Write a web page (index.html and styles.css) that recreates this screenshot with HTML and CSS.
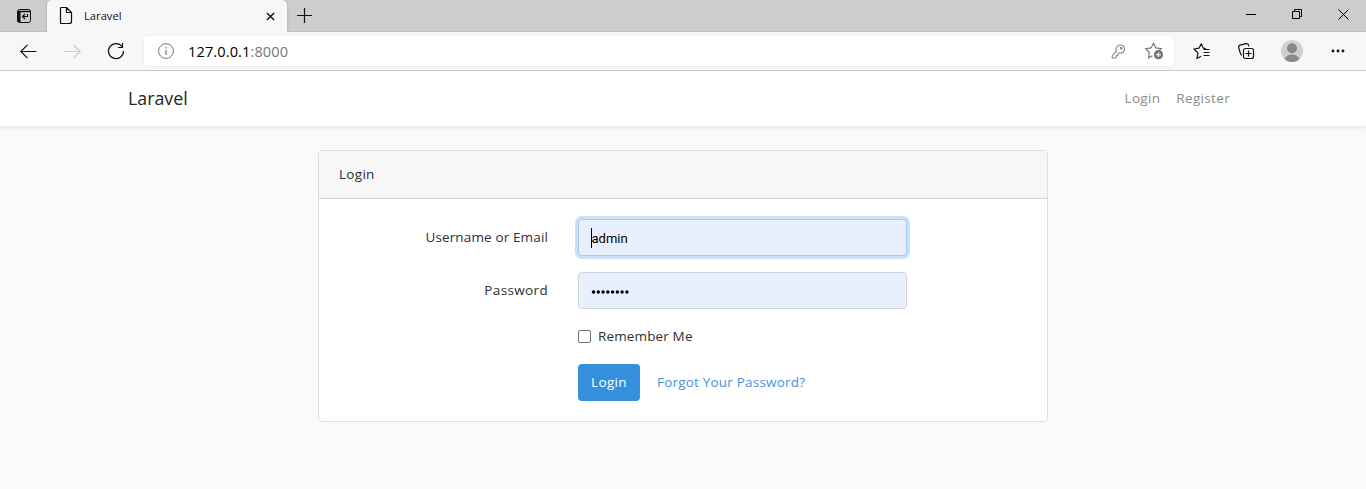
FILE: index.html
```html
<!DOCTYPE html>
<html lang="en">
<head>
<meta charset="utf-8">
<title>Laravel</title>
<link rel="stylesheet" href="styles.css">
</head>
<body>
<div class="tabstrip">
  <svg class="tab-actions" width="16" height="16" viewBox="0 0 16 16" fill="none" stroke="#111"><rect x="1.500" y="1.500" width="13" height="13" rx="2"/><path d="M2 3.500h12.500" stroke-width="1.500"/><path d="M3 3v11" stroke-width="3"/><path d="M11.500 6v2.500h-5m2.500-2.500-2.500 2.500 2.500 2.500" stroke-width="1.200"/></svg>
  <div class="tab">
    <svg width="14" height="18" viewBox="0 0 14 18" fill="none" stroke="#111" stroke-width="1.2" stroke-linejoin="round"><path d="M2.500 .5h5l5 5v9q0 2-2 2h-8q-1 0-1-1v-14q0-1 1-1zM7.500 .5v5h5"/></svg>
    <span class="tab-title">Laravel</span>
    <svg width="9" height="9" viewBox="0 0 10 10" stroke="#111" stroke-width="1.6"><path d="M1 1l8 8M9 1 1 9"/></svg>
  </div>
  <svg class="new-tab" width="15" height="15" viewBox="0 0 15 15" stroke="#111" stroke-width="1.2"><path d="M7.500 0v15M0 7.500h15"/></svg>
  <div class="window-buttons">
    <svg width="10" height="10" viewBox="0 0 10 10" stroke="#000"><path d="M0 5.500h10"/></svg>
    <svg width="10" height="10" viewBox="0 0 10 10" fill="none" stroke="#000"><path d="M.5 2.500h7v7h-7zM2.500 2.500v-2h7v7h-2"/></svg>
    <svg width="11" height="11" viewBox="0 0 11 11" stroke="#000"><path d="M.5.500l10 10M10.500.500l-10 10"/></svg>
  </div>
</div>
<div class="toolbar">
  <svg class="back" width="17" height="15" viewBox="0 0 17 15" fill="none" stroke="#111" stroke-width="1.2"><path d="M16.500 7.500H1M7.500.8.8 7.500l6.700 6.700"/></svg>
  <svg class="forward" width="17" height="15" viewBox="0 0 17 15" fill="none" stroke="#ccc" stroke-width="1.2"><path d="M.5 7.500H16M9.500.8l6.700 6.700-6.700 6.700"/></svg>
  <svg class="reload" width="18" height="18" viewBox="0 0 18 18" fill="none" stroke="#111" stroke-width="1.2"><path d="M15.300 5A7.500 7.500 0 1 0 16.500 9M15.500 1V5.500h-4.500"/></svg>
  <div class="address">
    <svg width="16" height="16" viewBox="0 0 16 16" fill="none" stroke="#777"><circle cx="8" cy="8" r="7.400"/><path d="M8 7v5M8 4v1.400" stroke-width="1.200"/></svg>
    <span class="url">127.0.0.1<span class="port">:8000</span></span>
    <svg class="key" width="15" height="15" viewBox="0 0 15 15" fill="none" stroke="#858585" stroke-width="1.100"><path d="M5.300 7.500C4.200 3.500 6.500 1 9.500 1c2.400 0 4 1.700 4 4 0 2.800-2.400 4.500-5.200 3.900L6.800 10.400v1.100H5.600v1.200l-1.200 1.300H1.200v-2.300z"/><circle cx="10.300" cy="4.200" r=".8"/></svg>
    <svg class="add-favorite" width="18" height="18" viewBox="0 0 18 18" fill="none" stroke="#777" stroke-width="1.200"><path d="M7.500 13.700 3.500 15.900l.8-5.400L.8 6.700l5.300-.8L8.500 1.200l2.400 4.700 5.300.8-1.700 1.600"/><circle cx="13.500" cy="12.700" r="4.600" fill="#707070" stroke="none"/><path d="M13.500 10.200v5M11 12.700h5" stroke="#fff"/></svg>
  </div>
  <svg class="favorites" width="18" height="17" viewBox="0 0 18 17" fill="none" stroke="#111" stroke-width="1.200" stroke-linejoin="round"><path d="M8 13.200 4 15.600l.9-5.600L1 6l5-.8L8.200.8l2.200 4.400 2.400.5M10.500 6.500h6M10.500 9.500h6M10.500 12.500h6"/></svg>
  <svg class="collections" width="17" height="17" viewBox="0 0 17 17" fill="none" stroke="#111" stroke-width="1.200"><rect x="5.500" y="5.500" width="10" height="10" rx="2"/><path d="M10.500 7.500v6M7.500 10.500h6M3.800 12.500C2.800 12 2.200 10.500.8 5Q.2 2.700 2 2.200L8.200.6q1.800-.4 2.300 1.400l.3 1.300"/></svg>
  <svg class="avatar" width="22" height="22" viewBox="0 0 22 22"><circle cx="11" cy="11" r="11" fill="#d2d0ce"/><circle cx="11" cy="8.300" r="5" fill="#8a8886"/><path d="M3.500 19q2-4.500 7.500-4.500t7.500 4.500q-3 3-7.500 3t-7.500-3z" fill="#8a8886"/></svg>
  <svg class="more" width="14" height="4" viewBox="0 0 14 4" fill="#111"><circle cx="2" cy="2" r="1.400"/><circle cx="7" cy="2" r="1.400"/><circle cx="12" cy="2" r="1.400"/></svg>
</div>
<nav class="navbar">
  <a class="brand">Laravel</a>
  <div class="links"><a class="nav-login">Login</a><a class="nav-register">Register</a></div>
</nav>
<main class="content">
  <section class="card">
    <header class="card-header">Login</header>
    <form class="card-body">
      <div class="row"><label class="user-label">Username or Email</label><div class="field focused"><span class="caret"></span><span class="value">admin</span></div></div>
      <div class="row"><label class="pass-label">Password</label><div class="field"><svg class="dots" width="38" height="6" viewBox="0 0 38 6"><path d="M2.500 3h34" stroke="#000" stroke-width="3.500" stroke-linecap="round" stroke-dasharray="0 4.770"/></svg></div></div>
      <div class="remember"><span class="checkbox"></span><span class="remember-text">Remember Me</span></div>
      <div class="actions"><div class="button">Login</div><a class="forgot">Forgot Your Password?</a></div>
    </form>
  </section>
</main>
</body>
</html>
```
FILE: styles.css
```css
* { box-sizing: border-box; }
body { margin: 0; height: 489px; overflow: hidden; background: #f8fafc; color: #2b3035; font: 400 13.5px/23px "Open Sans", sans-serif; }
svg { display: block; flex: none; overflow: visible; }
.tabstrip { display: flex; height: 32px; background: #cdcdcd; box-shadow: inset 0 -1px #c0c0c0; }
.tab-actions { margin: 8px 7px 0 16px; width: 16px; }
.tab { display: flex; align-items: center; width: 240px; margin-left: 8px; padding: 0 12px; height: 32px; background: #f7f7f7; border-radius: 5px 5px 0 0; box-shadow: 0 0 3px #aaa; clip-path: inset(0 -4px 0 -4px); }
.tab-title { flex: 1; margin-left: 11px; font: 11.2px/16px "Open Sans", sans-serif; color: #111; }
.new-tab { margin: 8px 0 0 10px; }
.window-buttons { display: flex; gap: 36px; margin: 9px 17px 0 auto; }
.toolbar { display: flex; align-items: center; height: 39px; padding: 0 21px 0 20px; background: #f7f7f7; border-bottom: 1px solid #ccc; }
.forward { margin-left: 27px; }
.reload { margin-left: 26px; }
.address { display: flex; align-items: center; width: 1030px; height: 30px; margin-left: 19px; padding: 0 11px 0 14px; border-radius: 4px; background: #fff; box-shadow: 0 0 3px #e7e7e7; }
.url { margin-left: 14px; font-size: 14.6px; letter-spacing: .1px; color: #000; }
.port { color: #777; }
.key { margin: 0 19px 0 auto; }
.favorites { margin-left: 19px; }
.collections { margin-left: 27px; }
.avatar { margin-left: 26px; }
.more { margin-left: 28px; }
.navbar { display: flex; align-items: center; justify-content: space-between; height: 55px; padding: 0 136px 0 128px; background: #fff; box-shadow: 0 2px 4px rgba(0,0,0,.075); }
.brand { font-size: 17.8px; color: #23262a; }
.links { display: flex; gap: 16px; color: #8c8c8c; letter-spacing: .33px; }
.content { padding-top: 24px; }
.card { width: 730px; height: 272px; margin: 0 auto; border: 1px solid #dcdedf; border-radius: 4px; background: #fff; overflow: hidden; }
.card-header { height: 48px; padding: 12px 20px; background: #f7f7f7; border-bottom: 1px solid #d7d7d7; letter-spacing: .3px; }
.card-body { padding-top: 20px; letter-spacing: .14px; }
.row { display: grid; grid-template-columns: 229px 329px; column-gap: 30px; align-items: center; height: 37px; margin-bottom: 16px; }
.row label { text-align: right; white-space: nowrap; }
.pass-label { letter-spacing: .35px; }
.field { display: flex; align-items: center; height: 37px; padding: 0 12px; border: 1px solid #ced4da; border-radius: 4px; background: #e8f0fe; color: #000; font: 13px/20px Roboto, sans-serif; letter-spacing: 0; }
.focused { border-color: #a1cbef; box-shadow: 0 0 0 3px #cbe2f6; }
.caret { width: 1px; height: 20px; background: #000; }
.value { padding-top: 2px; margin-left: -.5px; }
.dots { margin-top: 2px; }
.remember { display: flex; align-items: center; height: 23px; margin: 0 0 16px 259px; }
.checkbox { width: 13px; height: 13px; border: 1px solid #767676; border-radius: 2px; }
.remember-text { margin-left: 7px; }
.actions { display: flex; align-items: center; margin-left: 259px; }
.button { width: 62px; height: 37px; border-radius: 4px; background: #3490dc; color: #fff; line-height: 37px; letter-spacing: .35px; text-align: center; }
.forgot { margin-left: 17px; color: #4a93dc; letter-spacing: .2px; }
```
